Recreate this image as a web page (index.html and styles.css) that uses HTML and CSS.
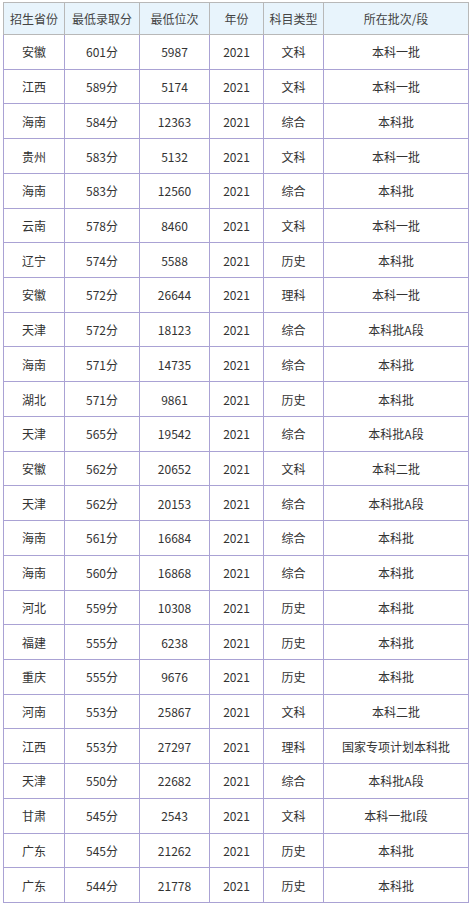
FILE: index.html
```html
<!DOCTYPE html>
<html lang="zh-CN">
<head>
<meta charset="utf-8">
<link rel="stylesheet" href="styles.css">
</head>
<body>
<table class="score-table">
  <colgroup>
    <col class="c1"><col class="c2"><col class="c3"><col class="c4"><col class="c5"><col class="c6">
  </colgroup>
  <thead>
    <tr><th>招生省份</th><th>最低录取分</th><th>最低位次</th><th>年份</th><th>科目类型</th><th>所在批次/段</th></tr>
  </thead>
  <tbody>
    <tr><td>安徽</td><td>601分</td><td>5987</td><td>2021</td><td>文科</td><td>本科一批</td></tr>
    <tr><td>江西</td><td>589分</td><td>5174</td><td>2021</td><td>文科</td><td>本科一批</td></tr>
    <tr><td>海南</td><td>584分</td><td>12363</td><td>2021</td><td>综合</td><td>本科批</td></tr>
    <tr><td>贵州</td><td>583分</td><td>5132</td><td>2021</td><td>文科</td><td>本科一批</td></tr>
    <tr><td>海南</td><td>583分</td><td>12560</td><td>2021</td><td>综合</td><td>本科批</td></tr>
    <tr><td>云南</td><td>578分</td><td>8460</td><td>2021</td><td>文科</td><td>本科一批</td></tr>
    <tr><td>辽宁</td><td>574分</td><td>5588</td><td>2021</td><td>历史</td><td>本科批</td></tr>
    <tr><td>安徽</td><td>572分</td><td>26644</td><td>2021</td><td>理科</td><td>本科一批</td></tr>
    <tr><td>天津</td><td>572分</td><td>18123</td><td>2021</td><td>综合</td><td>本科批A段</td></tr>
    <tr><td>海南</td><td>571分</td><td>14735</td><td>2021</td><td>综合</td><td>本科批</td></tr>
    <tr><td>湖北</td><td>571分</td><td>9861</td><td>2021</td><td>历史</td><td>本科批</td></tr>
    <tr><td>天津</td><td>565分</td><td>19542</td><td>2021</td><td>综合</td><td>本科批A段</td></tr>
    <tr><td>安徽</td><td>562分</td><td>20652</td><td>2021</td><td>文科</td><td>本科二批</td></tr>
    <tr><td>天津</td><td>562分</td><td>20153</td><td>2021</td><td>综合</td><td>本科批A段</td></tr>
    <tr><td>海南</td><td>561分</td><td>16684</td><td>2021</td><td>综合</td><td>本科批</td></tr>
    <tr><td>海南</td><td>560分</td><td>16868</td><td>2021</td><td>综合</td><td>本科批</td></tr>
    <tr><td>河北</td><td>559分</td><td>10308</td><td>2021</td><td>历史</td><td>本科批</td></tr>
    <tr><td>福建</td><td>555分</td><td>6238</td><td>2021</td><td>历史</td><td>本科批</td></tr>
    <tr><td>重庆</td><td>555分</td><td>9676</td><td>2021</td><td>历史</td><td>本科批</td></tr>
    <tr><td>河南</td><td>553分</td><td>25867</td><td>2021</td><td>文科</td><td>本科二批</td></tr>
    <tr><td>江西</td><td>553分</td><td>27297</td><td>2021</td><td>理科</td><td>国家专项计划本科批</td></tr>
    <tr><td>天津</td><td>550分</td><td>22682</td><td>2021</td><td>综合</td><td>本科批A段</td></tr>
    <tr><td>甘肃</td><td>545分</td><td>2543</td><td>2021</td><td>文科</td><td>本科一批I段</td></tr>
    <tr><td>广东</td><td>545分</td><td>21262</td><td>2021</td><td>历史</td><td>本科批</td></tr>
    <tr><td>广东</td><td>544分</td><td>21778</td><td>2021</td><td>历史</td><td>本科批</td></tr>
  </tbody>
</table>
</body>
</html>
```
FILE: styles.css
```css
html, body {
  margin: 0;
  padding: 0;
  background: #ffffff;
}
body {
  padding: 2px 0 0 3px;
  font-family: "Noto Sans CJK SC", "Noto Sans", sans-serif;
  font-size: 12px;
  color: #333333;
}
.score-table {
  border-collapse: collapse;
  table-layout: fixed;
  width: 465px;
}
.c1 { width: 61px; }
.c2 { width: 75px; }
.c3 { width: 70px; }
.c4 { width: 54px; }
.c5 { width: 60px; }
.c6 { width: 145px; }
.score-table th {
  background: #e8f4fc;
  border: 1px solid #b8b8b8;
  font-weight: normal;
  height: 31px;
  padding: 0;
  text-align: center;
  color: #444444;
}
.score-table td {
  border: 1px solid #aaa2d4;
  height: 33.72px;
  padding: 0;
  text-align: center;
  color: #333333;
}
```
